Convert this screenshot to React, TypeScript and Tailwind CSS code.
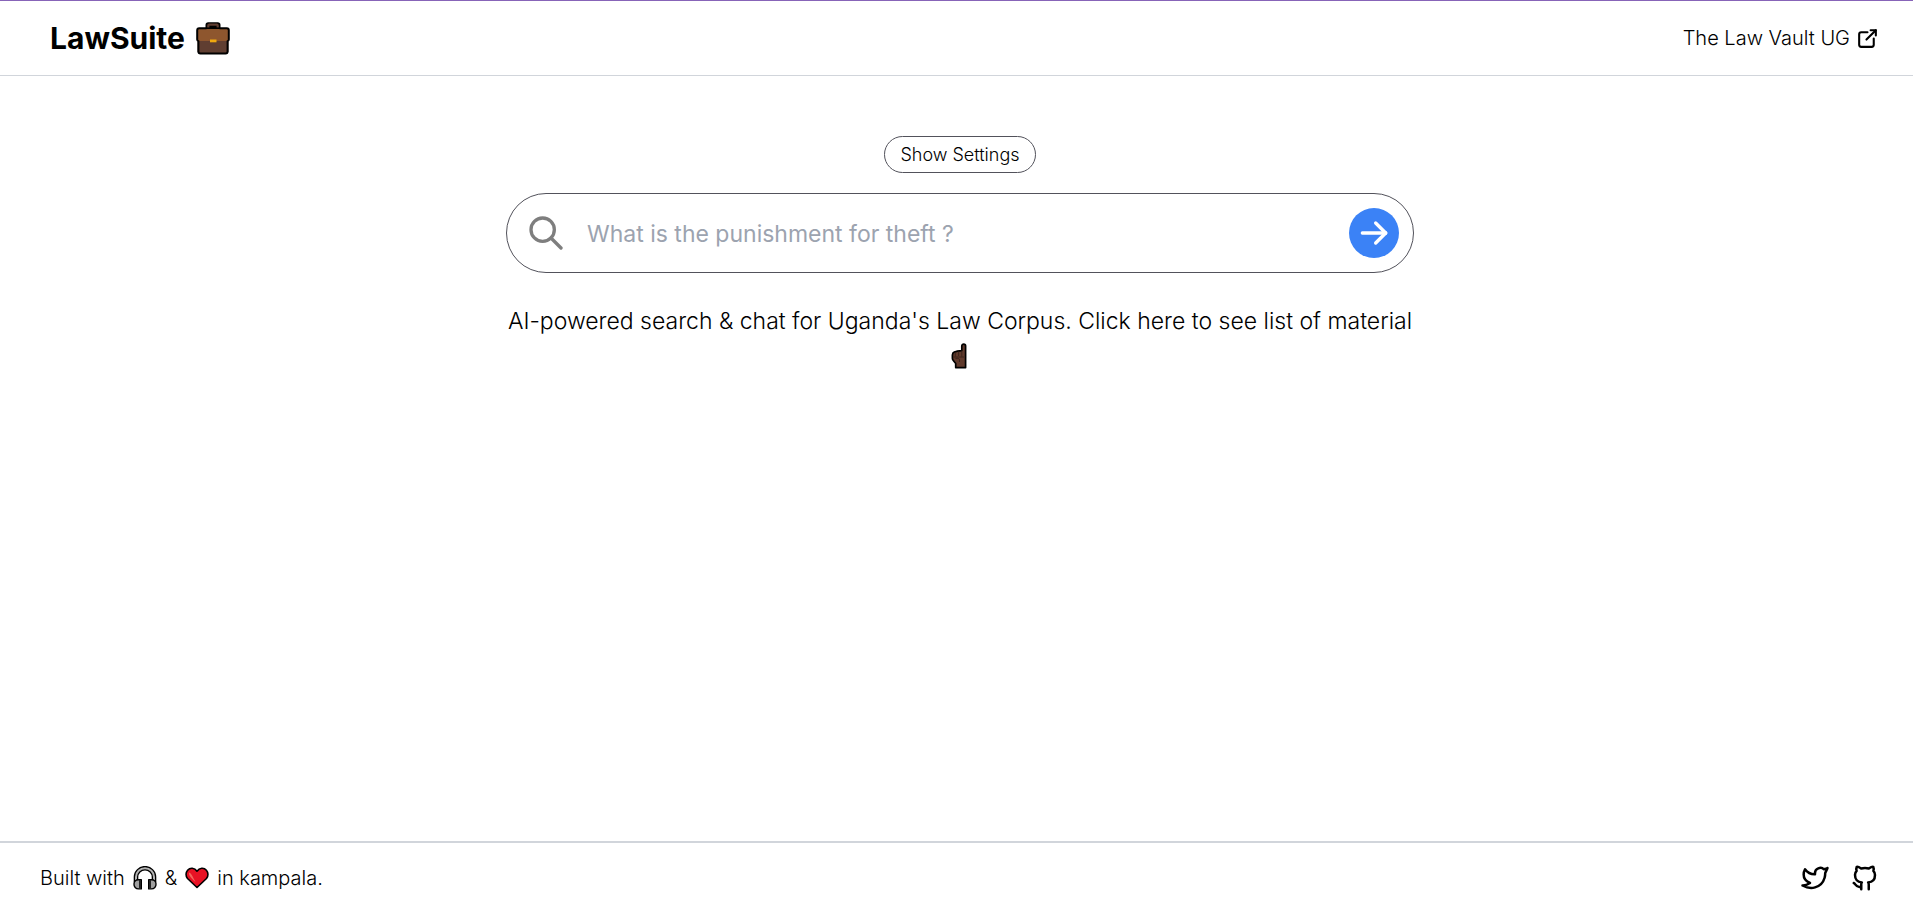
import React from "react";
import {
  TbArrowRight,
  TbBrandGithub,
  TbBrandTwitter,
  TbExternalLink,
  TbSearch,
} from "react-icons/tb";

function Briefcase() {
  return (
    <svg viewBox="0 0 34 33" className="h-[33px] w-[34px]" role="img" aria-label="Briefcase">
      <path d="M10.500 6V3a1.800 1.800 0 0 1 1.800-1.800h9.400A1.800 1.800 0 0 1 23.500 3v3" fill="#000" stroke="#000" strokeWidth="2" />
      <path d="M12.300 6V3.600a1 1 0 0 1 1-1h7.400a1 1 0 0 1 1 1V6" fill="#000" stroke="#603e31" strokeWidth="2.200" />
      <rect x="1.600" y="16" width="30.800" height="15.200" rx="2" fill="#603e31" />
      <path d="M3.200 6.200h27.600a2 2 0 0 1 2 2V17.500a1.600 1.600 0 0 1-1.600 1.500H2.800a1.600 1.600 0 0 1-1.600-1.500V8.200a2 2 0 0 1 2-2z" fill="#8e562e" />
      <rect x="14" y="17.500" width="6.500" height="2.800" fill="#f0a90f" />
      <path d="M10.500 6.200H3.200a2 2 0 0 0-2 2v9.300c0 .8.400 1.300 1.200 1.600v10.400a2 2 0 0 0 2 2h25.200a2 2 0 0 0 2-2V19.100c.8-.3 1.200-.8 1.200-1.600V8.200a2 2 0 0 0-2-2H23.500" fill="none" stroke="#000" strokeWidth="2" strokeLinejoin="round" />
      <path d="M10 6.200h14" stroke="#000" strokeWidth="1.600" />
    </svg>
  );
}

function PointingUp() {
  return (
    <svg viewBox="0 0 17 26" className="mt-1 h-[26px] w-[17px]" role="img" aria-label="Pointing up">
      <path
        d="M10.800 7.600V3a1.900 1.900 0 0 1 3.800 0V24.600H4.700V20.500L2.100 17.300a3 3 0 0 1-.7-2V12a3.300 3.300 0 0 1 2.200-3.100C5.500 8 8 7.800 10.800 7.600z"
        fill="#603a2c"
        stroke="#000"
        strokeWidth="1.700"
        strokeLinejoin="round"
      />
      <path d="M4.300 9.500v4M7.600 8.500v4.500M10.800 7.600v6M2.500 14h10.500M4.500 15.500c2.500-.5 4 0 4 1.500v2" fill="none" stroke="#38211a" strokeWidth="0.900" />
    </svg>
  );
}

function Headphones() {
  return (
    <svg viewBox="0 0 24 24" className="h-6 w-6" role="img" aria-label="Headphones">
      <path d="M3 16v-5a9 8.800 0 0 1 18 0v5" fill="none" stroke="#000" strokeWidth="4.600" />
      <path d="M3 16v-5a9 8.800 0 0 1 18 0v5" fill="none" stroke="#b4b4b4" strokeWidth="2" />
      <path d="M8.300 13.800H5.200A4.200 4.200 0 0 0 1 18a4.500 4.500 0 0 0 4.500 4.900h2.800zM15.700 13.800h3.100A4.200 4.200 0 0 1 23 18a4.500 4.500 0 0 1-4.500 4.900h-2.800z" fill="#a0a0a0" stroke="#000" strokeWidth="1.400" strokeLinejoin="round" />
      <path d="M7 14v8.500M17 14v8.500" stroke="#222" strokeWidth="2" />
    </svg>
  );
}

function Heart() {
  return (
    <svg viewBox="0 0 24 22" className="h-[22px] w-6" role="img" aria-label="Heart">
      <path
        d="M12 20.500 2.500 11.500C.5 9.200.6 5.500 2.600 3.200 5 .5 9.500.5 12 4.200 14.500.5 19 .5 21.400 3.200c2 2.300 2.100 6 .1 8.300z"
        fill="#e81224"
        stroke="#000"
        strokeWidth="1.600"
        strokeLinejoin="round"
      />
      <path d="M4 5.500c-.4 2.500 1.500 5 6.500 9.500C7.500 9.500 7 7 4 5.500z" fill="#f4655b" />
    </svg>
  );
}

export default function App() {
  return (
    <div className="flex min-h-screen flex-col border-t border-[#8764b8] bg-white font-['Inter',sans-serif] text-xl font-light text-black">
      <header className="flex h-[75px] items-center justify-between border-b border-[#d1d5db] pr-[33px] pl-[50px]">
        <a href="#" className="flex items-center gap-[11px] text-3xl font-bold">
          LawSuite
          <Briefcase />
        </a>
        <a href="#" className="flex items-center gap-[5px]">
          The Law Vault UG
          <TbExternalLink className="size-[25px]" />
        </a>
      </header>

      <main className="flex flex-1 flex-col items-center pt-[60px] pl-[7px]">
        <div className="flex w-full max-w-[938px] flex-col items-center px-[15px]">
          <button className="h-[37px] rounded-full border border-[#52525b] px-[15px] text-lg leading-6">
            Show Settings
          </button>
          <div className="relative mt-5 w-full">
            <TbSearch className="absolute top-5 left-5 size-10 opacity-50" />
            <input
              type="text"
              aria-label="Search"
              placeholder="What is the punishment for theft ?"
              className="block h-20 w-full rounded-full border border-[#52525b] px-20 pt-0.5 text-[23px] font-normal placeholder:text-[#9ca3af]"
            />
            <button
              aria-label="Submit search"
              className="absolute top-[15px] right-[15px] flex size-[50px] items-center justify-center rounded-full bg-[#3b82f6] text-white"
            >
              <TbArrowRight className="size-10" />
            </button>
          </div>
          <a href="#" className="mt-[31px] flex flex-col items-center text-center text-[23px] leading-[35px]">
            AI-powered search &amp; chat for Uganda's Law Corpus. Click here to see list of material
            <PointingUp />
          </a>
        </div>
      </main>

      <footer className="flex h-[57px] items-center justify-between border-t-2 border-[#d1d5db] pt-3.5 pr-[33px] pl-10">
        <p className="flex items-center gap-2">
          Built with <Headphones /> &amp; <Heart /> in kampala.
        </p>
        <div className="flex items-center gap-5">
          <a href="#" aria-label="Twitter">
            <TbBrandTwitter className="size-[30px]" />
          </a>
          <a href="#" aria-label="GitHub">
            <TbBrandGithub className="size-[30px]" />
          </a>
        </div>
      </footer>
    </div>
  );
}
